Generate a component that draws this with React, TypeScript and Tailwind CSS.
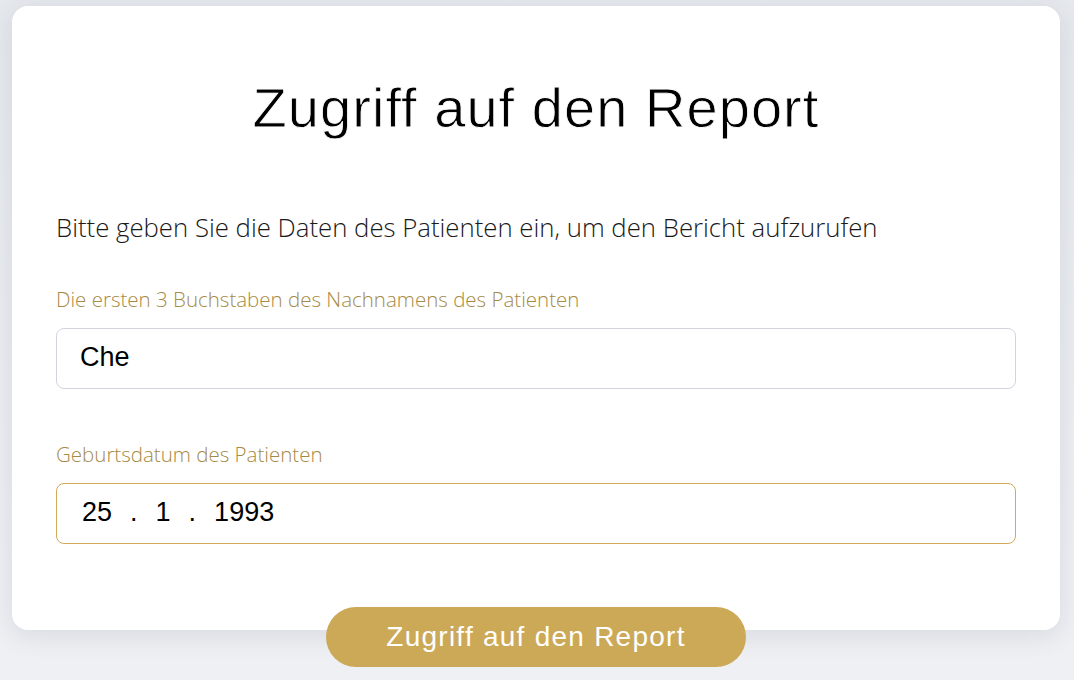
import React from "react";

export default function App() {
  return (
    <div className="min-h-[680px] w-full bg-gradient-to-b from-[#e5e8ed] to-[#eff0f4] pt-[6px] pl-[12px] pr-[14px] overflow-hidden">
      <div className="flex flex-col items-center">
        <div className="w-full rounded-[16px] bg-white shadow-[0_6px_24px_rgba(60,70,90,0.12)] px-[44px] pt-[70px] pb-[86px]">
          <h1 className="text-center text-[56px] leading-[64px] font-normal text-black tracking-[1.05px] [-webkit-text-stroke:0.8px_#fff] [font-family:'Liberation_Sans',Arial,sans-serif]">
            Zugriff auf den Report
          </h1>
          <p className="mt-[70px] text-[25.75px] leading-[34px] font-light text-[#1a1a1a] [font-family:'Open_Sans',sans-serif]">
            Bitte geben Sie die Daten des Patienten ein, um den Bericht aufzurufen
          </p>
          <label className="block mt-[42px] text-[20.5px] leading-[26px] font-light text-[#a58a45] [font-family:'Open_Sans',sans-serif]">
            Die ersten 3 Buchstaben des Nachnamens des Patienten
          </label>
          <div className="mt-[16px] h-[61px] rounded-[8px] border border-[#d3d3e2] flex items-center px-[23px] pb-[3px] text-[27px] text-black [font-family:'Liberation_Sans',Arial,sans-serif]">
            Che
          </div>
          <label className="block mt-[52px] text-[20.5px] leading-[26px] font-light text-[#a58a45] [font-family:'Open_Sans',sans-serif]">
            Geburtsdatum des Patienten
          </label>
          <div className="mt-[16px] h-[61px] rounded-[8px] border border-[#cfaa5c] flex items-center px-[25px] pb-[3px] text-[27px] text-black [font-family:'Liberation_Sans',Arial,sans-serif]">
            <span>25</span>
            <span className="ml-[18px]">.</span>
            <span className="ml-[18px]">1</span>
            <span className="ml-[18px]">.</span>
            <span className="ml-[18px]">1993</span>
          </div>
        </div>
        <button className="-mt-[23px] h-[60px] w-[420px] rounded-full bg-[#cca956] text-white text-[28px] [font-family:'Liberation_Sans',Arial,sans-serif] tracking-[1.25px]">
          Zugriff auf den Report
        </button>
      </div>
    </div>
  );
}
